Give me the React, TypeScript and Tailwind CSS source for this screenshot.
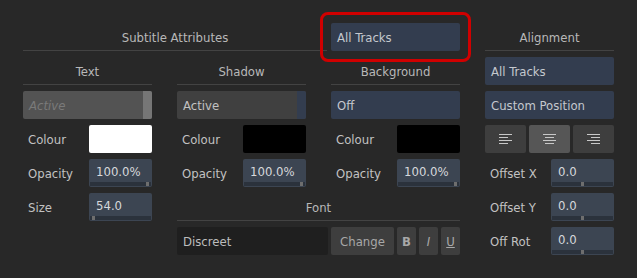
import { ReactNode } from 'react';

function Header({ children }: { children: ReactNode }) {
  return (
    <div className="flex items-center justify-center border-b border-[#434343] pt-[2px] text-[#b8b8b8]">
      {children}
    </div>
  );
}

function Dropdown({ label }: { label: string }) {
  return (
    <div className="flex items-center rounded-[2px] bg-[#333d4f] px-[6px] text-[#c4c8ce]">{label}</div>
  );
}

function Label({ children }: { children: ReactNode }) {
  return <span className="flex-1 pl-[5px] text-[#c2c2c2]">{children}</span>;
}

const handlePos = {
  start: 'justify-start',
  center: 'justify-center',
  end: 'justify-end',
};

function NumberField({ value, pos }: { value: string; pos: keyof typeof handlePos }) {
  return (
    <div className="flex w-[63px] flex-col rounded-[2px] bg-[#3c4552]">
      <div className="flex flex-1 items-center px-[7px] pt-[1px] text-[#d6d8db]">{value}</div>
      <div className={`mx-[1px] mb-[1px] flex h-[4px] bg-[#2b323c] px-[2px] ${handlePos[pos]}`}>
        <div className="w-[3px] bg-[#6e6e6e]" />
      </div>
    </div>
  );
}

function Row({ label, children }: { label: string; children: ReactNode }) {
  return (
    <div className="flex items-stretch">
      <div className="flex flex-1 items-center">
        <Label>{label}</Label>
      </div>
      {children}
    </div>
  );
}

function Swatch({ color }: { color: string }) {
  return <div className={`w-[63px] rounded-[2px] ${color}`} />;
}

function AlignIcon({ align }: { align: 'left' | 'center' | 'right' }) {
  const lines = [13, 9, 13, 9];
  return (
    <svg width="15" height="12" viewBox="0 0 15 12">
      {lines.map((w, i) => {
        const x = align === 'left' ? 1 : align === 'right' ? 14 - w : (15 - w) / 2;
        return <rect key={i} x={x} y={1 + i * 3} width={w} height="1" fill="#c8c8c8" />;
      })}
    </svg>
  );
}

export default function App() {
  return (
    <div className="h-[278px] w-[637px] bg-[#282828] p-[23px] font-['DejaVu_Sans_Condensed','Noto_Sans',sans-serif] text-[13px] leading-none">
      <div className="grid grid-cols-[repeat(4,129px)] grid-rows-[repeat(7,28px)] gap-x-[25px] gap-y-[6px]">
        {/* row 1 */}
        <div className="col-span-3 flex gap-[4px]">
          <div className="flex flex-1 items-center justify-center border-b border-[#434343] pt-[2px] text-[#b8b8b8]">
            Subtitle Attributes
          </div>
          <div className="relative flex w-[129px]">
            <div className="flex flex-1 items-center rounded-[2px] bg-[#333d4f] px-[6px] text-[#c4c8ce]">
              All Tracks
            </div>
            <div className="absolute -inset-[11px] rounded-[8px] border-[3px] border-[#d00000]" />
          </div>
        </div>
        <Header>Alignment</Header>

        {/* row 2 */}
        <Header>Text</Header>
        <Header>Shadow</Header>
        <Header>Background</Header>
        <Dropdown label="All Tracks" />

        {/* row 3 */}
        <div className="flex rounded-[2px] bg-[#535353]">
          <span className="flex flex-1 items-center px-[6px] italic text-[#7a7a7a]">Active</span>
          <div className="w-[9px] rounded-r-[2px] bg-[#767676]" />
        </div>
        <div className="flex rounded-[2px] bg-[#404040]">
          <span className="flex flex-1 items-center px-[6px] text-[#c2c2c2]">Active</span>
          <div className="w-[9px] rounded-r-[2px] bg-[#333d4f]" />
        </div>
        <Dropdown label="Off" />
        <Dropdown label="Custom Position" />

        {/* row 4 */}
        <Row label="Colour">
          <Swatch color="bg-white" />
        </Row>
        <Row label="Colour">
          <Swatch color="bg-black" />
        </Row>
        <Row label="Colour">
          <Swatch color="bg-black" />
        </Row>
        <div className="grid grid-cols-3 gap-[3px]">
          <button className="flex items-center justify-center rounded-[2px] bg-[#3e3e3e]">
            <AlignIcon align="left" />
          </button>
          <button className="flex items-center justify-center rounded-[2px] bg-[#565656]">
            <AlignIcon align="center" />
          </button>
          <button className="flex items-center justify-center rounded-[2px] bg-[#3e3e3e]">
            <AlignIcon align="right" />
          </button>
        </div>

        {/* row 5 */}
        <Row label="Opacity">
          <NumberField value="100.0%" pos="end" />
        </Row>
        <Row label="Opacity">
          <NumberField value="100.0%" pos="end" />
        </Row>
        <Row label="Opacity">
          <NumberField value="100.0%" pos="end" />
        </Row>
        <Row label="Offset X">
          <NumberField value="0.0" pos="center" />
        </Row>

        {/* row 6 */}
        <Row label="Size">
          <NumberField value="54.0" pos="start" />
        </Row>
        <div className="col-span-2">
          <div className="flex h-full items-center justify-center border-b border-[#434343] pt-[2px] text-[#b8b8b8]">
            Font
          </div>
        </div>
        <Row label="Offset Y">
          <NumberField value="0.0" pos="center" />
        </Row>

        {/* row 7 */}
        <div />
        <div className="col-span-2 flex gap-[3px]">
          <div className="flex flex-1 items-center rounded-[2px] bg-[#1f1f1f] px-[6px] text-[#bdbdbd]">Discreet</div>
          <button className="w-[63px] rounded-[2px] bg-[#3e3e3e] text-[#a8a8a8]">Change</button>
          <button className="w-[19px] rounded-[2px] bg-[#3e3e3e] font-bold text-[#a8a8a8]">B</button>
          <button className="w-[19px] rounded-[2px] bg-[#3e3e3e] italic text-[#a8a8a8]">I</button>
          <button className="w-[19px] rounded-[2px] bg-[#3e3e3e] text-[#a8a8a8] underline">U</button>
        </div>
        <Row label="Off Rot">
          <NumberField value="0.0" pos="center" />
        </Row>
      </div>
    </div>
  );
}
